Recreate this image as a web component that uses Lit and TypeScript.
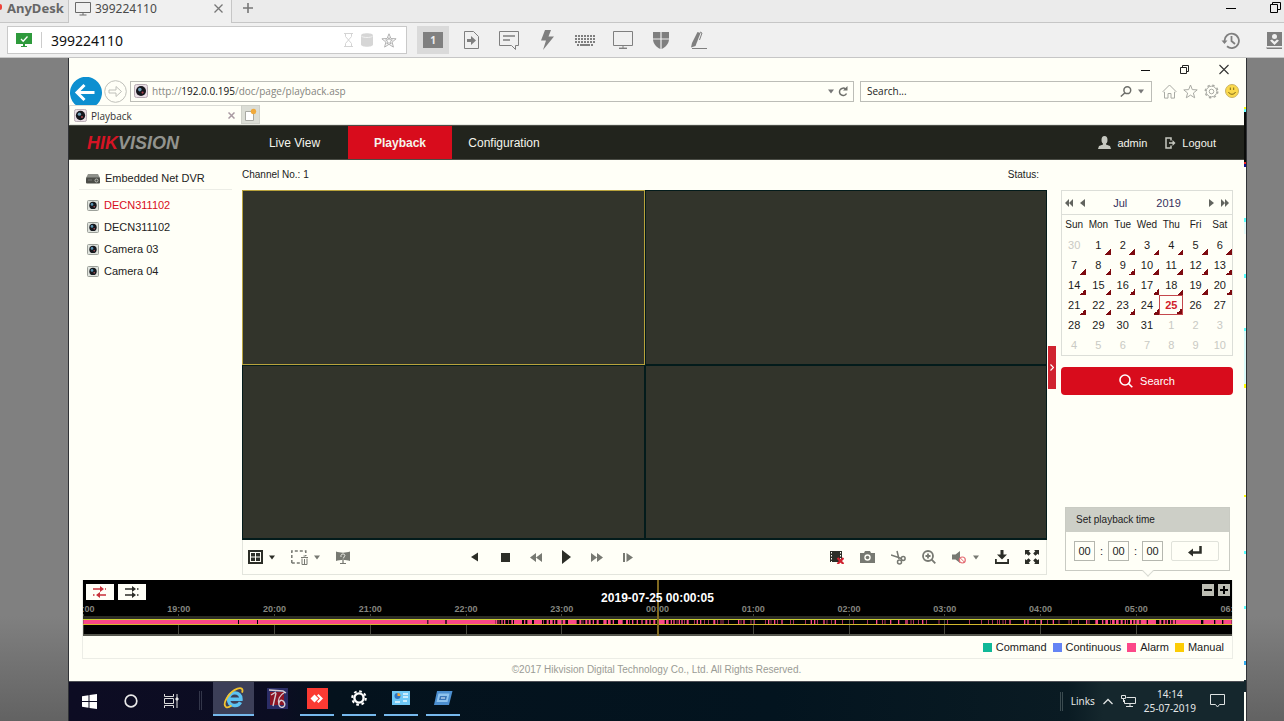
import { LitElement, html, css, svg } from "lit";
import { customElement, state } from "lit/decorators.js";
import { classMap } from "lit/directives/class-map.js";

/* ---------- shared icons ---------- */

const cameraGlyph = (size: number) => html`<svg width=${size} height=${size} viewBox="0 0 14 14" aria-hidden="true">
  <rect x="0.5" y="0.5" width="13" height="13" rx="2" fill="#eadfe6" stroke="#b7aab2" />
  <circle cx="7" cy="7" r="5" fill="#16161c" />
  <circle cx="5.8" cy="5.6" r="1.8" fill="#6f9fb8" />
  <circle cx="8.6" cy="8.6" r="1.1" fill="#a8434e" />
</svg>`;

const smallCamera = html`<svg width="12" height="11" viewBox="0 0 12 11" aria-hidden="true">
  <rect x="0.5" y="0.5" width="11" height="10" rx="1" fill="#dfe3dd" stroke="#9da19a" />
  <circle cx="6" cy="5.4" r="3.7" fill="#15181d" />
  <circle cx="5" cy="4.4" r="1.3" fill="#5b94b5" />
  <circle cx="7.2" cy="6.8" r="0.8" fill="#b0505a" />
</svg>`;

const caret = (fill: string) => html`<svg width="6" height="5" viewBox="0 0 6 5" aria-hidden="true"><path d="M0 0.5H6L3 4.5z" fill=${fill} /></svg>`;

/* ---------- AnyDesk frame ---------- */

@customElement("remote-frame")
class RemoteFrame extends LitElement {
  static styles = css`
    :host { display: block; background: #f0f0f0; font-family: "Noto Sans", "Open Sans", sans-serif; color: #4a4a4a; }
    button { border: 0; padding: 0; margin: 0; background: none; font: inherit; color: inherit; display: flex; align-items: center; justify-content: center; }
    svg { display: block; flex: none; }
    .tabs { display: flex; height: 23px; background: #ebebeb; box-sizing: border-box; overflow: hidden; }
    .brand { width: 69px; box-sizing: border-box; border-right: 1px solid #c6c6c6; border-bottom: 1px solid #c6c6c6; font-size: 13px; line-height: 16px; font-weight: 700; color: #666; background: #e6e6e6; display: flex; gap: 5px; overflow: hidden; }
    .brand i { width: 2px; height: 6px; margin-top: 4px; background: #ef443b; border-radius: 0 3px 3px 0; }
    .tab { width: 162px; display: flex; align-items: center; gap: 4px; padding: 0 8px 6px 6px; box-sizing: border-box; background: #f0f0f0; font-size: 12px; }
    .tab button { margin-left: auto; }
    .rest { flex: 1; border-left: 1px solid #c6c6c6; border-bottom: 1px solid #c6c6c6; display: flex; padding: 0 3px 7px 10px; align-items: center; }
    .win { margin-left: auto; gap: 34px; display: flex; align-items: center; }
    .bar { display: flex; align-items: center; height: 35px; box-sizing: border-box; border-bottom: 1px solid #c6c6c6; padding: 1px 2px 1px 7px; }
    .address { box-sizing: border-box; width: 400px; height: 28px; border: 1px solid #c9c9c9; background: #fff; display: flex; align-items: center; padding: 0 9px 0 8px; }
    .address .sep { width: 1px; height: 16px; background: #ccc; margin: 0 9px; }
    .address input { flex: 1; min-width: 0; border: 0; padding: 0; outline: 0; font: 14px "Noto Sans", sans-serif; color: #111; background: none; height: 24px; }
    .hints { display: flex; gap: 8px; align-items: center; }
    .tools { display: flex; margin-left: 10px; align-items: center; gap: 6px; }
    .tools button { width: 32px; height: 28px; }
    .tools .on { background: #dadada; }
    .num { width: 20px; height: 16px; background: #808080; color: #eee; font-size: 10px; line-height: 16px; font-weight: 700; text-align: center; }
    .end { margin-left: auto; display: flex; gap: 26px; }
  `;
  render() {
    const g = "#7f7f7f";
    return html`
      <div class="tabs">
        <div class="brand"><i></i><span>AnyDesk</span></div>
        <div class="tab">
          <svg width="16" height="15" viewBox="0 0 16 15" fill="none" stroke="#6a6a6a"><path d="M.5 1.5h15v10H.5zM8 11.5v2.500M4.500 14h7" /></svg>
          <span>399224110</span>
          <button aria-label="Close tab"><svg width="9" height="9" viewBox="0 0 9 9"><path d="M.5.5l8 8M8.500.5l-8 8" stroke="#777" stroke-width="1.300" /></svg></button>
        </div>
        <div class="rest">
          <button aria-label="New tab"><svg width="12" height="10" viewBox="0 0 12 10"><path d="M1 5h10M6 0v10" stroke="#777" stroke-width="1.600" /></svg></button>
          <div class="win">
            <button aria-label="Minimize"><svg width="10" height="10" viewBox="0 0 10 10"><path d="M0 5.500h10" stroke="#000" /></svg></button>
            <button aria-label="Restore"><svg width="11" height="11" viewBox="0 0 11 11" fill="none" stroke="#000"><path d="M.5 2.500h7v8h-7zM2.500 2.500v-2h8v7h-3" /></svg></button>
          </div>
        </div>
      </div>
      <div class="bar">
        <div class="address">
          <svg width="16" height="14" viewBox="0 0 16 14"><path d="M0 0h16v11H9v2h2v1H5v-1h2v-2H0z" fill="#2e9a3c" /><path d="M5 6l2.200 2.200L11.500 3.500" stroke="#fff" fill="none" stroke-width="1.300" /></svg>
          <span class="sep"></span>
          <input aria-label="Remote address" .value=${"399224110"} />
          <div class="hints">
            <svg width="9" height="14" viewBox="0 0 9 14" fill="none" stroke="#d4d4d4"><path d="M0 .5h9M0 13.500h9M1.500 1v2.500L4.500 7l3-3.500V1M1.500 13v-2.500L4.500 7l3 3.500V13" /></svg>
            <svg width="12" height="14" viewBox="0 0 12 14" fill="#d6d6d6"><path d="M0 2.500C0-.4 12-.4 12 2.500v9c0 3-12 3-12 0z" /><path d="M.5 3.200c1.500 1.700 9.500 1.700 11 0" fill="none" stroke="#f2f2f2" /></svg>
            <svg width="16" height="15" viewBox="0 0 16 15" fill="none" stroke="#a9a9a9" stroke-width=".9"><path d="M8 .8l1.900 4.700 5.200.3-4 3.300 1.300 5L8 11.300l-4.400 2.800 1.300-5-4-3.300 5.200-.3z" /><path d="M8 4.500l.9 2.300 2.500.2-1.900 1.600.6 2.400L8 9.700 5.900 11l.6-2.400L4.600 7l2.500-.2z" /></svg>
          </div>
        </div>
        <div class="tools">
          <button class="on" aria-label="Display 1"><span class="num">1</span></button>
          <button aria-label="File transfer"><svg width="15" height="18" viewBox="0 0 15 18"><path d="M.5.5h9l5 5v12H.5z" fill="none" stroke=${g} /><path d="M3 8h4V5l5 4.500L7 14v-3H3z" fill=${g} /></svg></button>
          <button aria-label="Chat"><svg width="20" height="19" viewBox="0 0 20 19"><path d="M.5.5h19v14h-3v4l-4-4H.5z" fill="none" stroke=${g} /><path d="M4 5h12M4 9h7" stroke=${g} stroke-width="1.400" /></svg></button>
          <button aria-label="Actions"><svg width="13" height="20" viewBox="0 0 13 20"><path d="M4 0h6L7.500 6.500H13L2 20l3-9.500H0z" fill=${g} /></svg></button>
          <button aria-label="Keyboard"><svg width="20" height="11" viewBox="0 0 20 11" stroke=${g} stroke-width="2"><path d="M0 1h20M0 4h20M0 7h20" stroke-dasharray="2 1" /><path d="M2 10h2M5 10h10M16 10h2" /></svg></button>
          <button aria-label="Display"><svg width="20" height="18" viewBox="0 0 20 18" fill="none" stroke=${g}><path d="M.5.5h19v14H.5zM10 15v2" /><path d="M6 17.300h8" stroke-width="1.400" /></svg></button>
          <button aria-label="Permissions"><svg width="16" height="17" viewBox="0 0 16 17" fill=${g}><path d="M0 0h7.400v6.500H0zM8.600 0H16v6.500H8.600zM0 7.500h7.400V17C3 15 .3 11.500 0 7.500zM8.600 7.500H16c-.3 4-3 7.500-7.400 9.500z" /></svg></button>
          <button aria-label="Whiteboard"><svg width="16" height="18" viewBox="0 0 16 18" fill=${g}><path d="M6.500 1l3 1L4.500 15 0 16.500 1 12z" /><path d="M8.500 9l2.500-7-2-1" stroke=${g} fill="none" /><path d="M1 17h15v1H1z" /></svg></button>
        </div>
        <div class="end">
          <button aria-label="History"><svg width="19" height="17" viewBox="0 0 19 17" fill="none" stroke=${g} stroke-width="1.800"><path d="M3.500 9A7.200 7.200 0 1 1 6 14.300" /><path d="M10.500 4v5l3.500 3" /><path d="M.5 8.500h6L3.500 12z" fill=${g} stroke="none" /></svg></button>
          <button aria-label="Address book"><svg width="16" height="17" viewBox="0 0 16 17"><path d="M1 0h15v14H1zM0 15.500h16V17H1z" fill=${g} /><circle cx="8.500" cy="4.500" r="2.500" fill="#f0f0f0" /><path d="M4 8.500L8.500 13 13 8.500l-2-1-2.500 2.300L6 7.500z" fill="#f0f0f0" /></svg></button>
        </div>
      </div>`;
  }
}

/* ---------- Internet Explorer chrome ---------- */

@customElement("ie-chrome")
class IeChrome extends LitElement {
  static styles = css`
    :host { display: block; font-family: "Open Sans", "Noto Sans", sans-serif; font-size: 10px; color: #333; }
    button { border: 0; padding: 0; margin: 0; background: none; font: inherit; color: inherit; display: flex; align-items: center; justify-content: center; }
    svg { display: block; flex: none; }
    .title { height: 19px; box-sizing: border-box; display: flex; justify-content: flex-end; align-items: flex-end; gap: 30px; padding: 0 15px 3px 0; }
    .title svg { overflow: visible; }
    .nav { display: flex; align-items: center; height: 28px; padding: 0 5px 0 1px; }
    .back { width: 32px; height: 28px; }
    .forward { margin: 0 3px 0 2px; }
    .field { box-sizing: border-box; height: 21px; border: 1px solid #bcbdb7; display: flex; align-items: center; gap: 6px; padding: 0 5px 0 3px; font-size: 10px; }
    .url { flex: 1; gap: 4px; color: #85857f; min-width: 0; }
    .url a { flex: 1; color: inherit; text-decoration: none; white-space: nowrap; }
    .url b { font-weight: 400; color: #111; }
    .find { width: 292px; margin: 0 10px 0 6px; padding: 0 7px 0 6px; min-width: 0; }
    .find input { flex: 1; min-width: 0; border: 0; padding: 0; outline: 0; background: none; font: inherit; color: #222; }
    .find input::placeholder { color: #222; opacity: 1; }
    .icons { display: flex; gap: 6px; }
    .tabs { display: flex; height: 19px; border-bottom: 1px solid #e6e8e0; margin-right: 14px; }
    .tab { width: 172px; box-sizing: border-box; padding: 1px 6px 0 4px; display: flex; align-items: center; gap: 4px; border-top: 1px solid #dadbd5; border-left: 1px solid #dadbd5; }
    .tab button { margin-left: auto; }
    .new { width: 19px; background: #dcded6; box-sizing: border-box; border: 1px solid #cfd1c9; }
  `;
  render() {
    return html`
      <div class="title">
        <button aria-label="Minimize"><svg width="9" height="10" viewBox="0 0 9 10"><path d="M0 6.500h9" stroke="#111" /></svg></button>
        <button aria-label="Restore"><svg width="9" height="9" viewBox="0 0 9 9" fill="none" stroke="#222"><path d="M.5 2.500h6v6h-6zM2.500 2.500v-2h6v6h-2" /></svg></button>
        <button aria-label="Close"><svg width="10" height="9" viewBox="0 0 10 9"><path d="M.5 0l9 9M9.500 0l-9 9" stroke="#333" stroke-width="1.100" /></svg></button>
      </div>
      <div class="nav">
        <button class="back" aria-label="Back"><svg width="32" height="29" viewBox="0 0 32 29"><path d="M7 29a16 16 0 1 1 18 0z" fill="#0d8fd0" /><path d="M7.500 15.500h17M14.500 8l-7.500 7.500 7.500 7.500" stroke="#fff" stroke-width="3" fill="none" /></svg></button>
        <button class="forward" aria-label="Forward"><svg width="23" height="23" viewBox="0 0 23 23" fill="none" stroke="#bfc0ba"><circle cx="11.500" cy="11.500" r="10.800" /><path d="M5 10h7V6.500l5.500 5-5.500 5V13H5z" /></svg></button>
        <div class="field url">
          ${cameraGlyph(14)}
          <a href="#">http://<b>192.0.0.195</b>/doc/page/playback.asp</a>
          <button aria-label="Show address bar list">${caret("#777")}</button>
          <button aria-label="Refresh"><svg width="10" height="11" viewBox="0 0 10 11"><path d="M8.500 7.500A3.700 3.700 0 1 1 7.600 3" fill="none" stroke="#6d6e69" stroke-width="1.500" /><path d="M9.500 0v4.500H5z" fill="#6d6e69" /></svg></button>
        </div>
        <label class="field find">
          <input type="text" aria-label="Search the web" placeholder="Search..." />
          <svg width="12" height="11" viewBox="0 0 12 11" fill="none" stroke="#6d6e69" stroke-width="1.500"><circle cx="7.300" cy="4.200" r="3.400" /><path d="M5 6.700L.8 10.500" /></svg>
          ${caret("#777")}
        </label>
        <div class="icons">
          <button aria-label="Home"><svg width="15" height="15" viewBox="0 0 15 15" fill="none" stroke="#a9aaa4"><path d="M1 7.500L7.500 1 14 7.500l-1 1-.5-.4v6h-3.500V9.500H6v4.600H2.500v-6L2 8.500z" /></svg></button>
          <button aria-label="Favorites"><svg width="15" height="15" viewBox="0 0 15 15" fill="none" stroke="#a9aaa4"><path d="M7.500 1l1.800 4.600 4.900.3-3.800 3.100 1.300 4.800-4.200-2.700-4.200 2.700 1.300-4.800L.8 5.900l4.900-.3z" /></svg></button>
          <button aria-label="Tools"><svg width="15" height="15" viewBox="0 0 15 15" fill="none" stroke="#a9aaa4"><circle cx="7.500" cy="7.500" r="2.300" /><circle cx="7.500" cy="7.500" r="5.300" /><circle cx="7.500" cy="7.500" r="6.300" stroke-dasharray="2.400 2.550" stroke-width="1.400" /></svg></button>
          <button aria-label="Feedback"><svg width="14" height="14" viewBox="0 0 14 14"><circle cx="7" cy="7" r="6.500" fill="#fbd94b" stroke="#c9b264" /><path d="M5.300 3.500v2.500M8.700 3.500v2.500M3.500 8c1.200 3 5.800 3 7 0" stroke="#806a1c" fill="none" /></svg></button>
        </div>
      </div>
      <div class="tabs">
        <div class="tab">${cameraGlyph(13)}<span>Playback</span><button aria-label="Close tab"><svg width="7" height="7" viewBox="0 0 7 7"><path d="M.5.5l6 6M6.500.5l-6 6" stroke="#a99aa2" stroke-width="1.500" /></svg></button></div>
        <button class="new" aria-label="New tab"><svg width="13" height="14" viewBox="0 0 13 14"><path d="M1.500 3.500h8v9h-8z" fill="#fff" stroke="#a8a9a3" /><circle cx="9.500" cy="3.500" r="2.700" fill="#f0a93b" /></svg></button>
      </div>`;
  }
}

/* ---------- calendar ---------- */

@customElement("month-calendar")
class MonthCalendar extends LitElement {
  @state() private selected = 25;
  static styles = css`
    :host { display: block; border: 1px solid #dcded8; font-size: 10px; color: #1b1b1b; }
    button { border: 0; padding: 0; margin: 0; background: none; font: inherit; color: inherit; }
    .head { display: flex; align-items: center; height: 23px; border-bottom: 1px solid #dcded8; padding: 0 3px; gap: 5px; color: #35305c; font-size: 11px; }
    .head button { display: flex; align-items: center; }
    .head .label { flex: 1; display: flex; justify-content: center; gap: 29px; }
    table { width: 100%; border-collapse: collapse; table-layout: fixed; }
    th, td { padding: 0; height: 20px; font-weight: 400; text-align: center; line-height: 18px; }
    td button { display: block; width: 100%; height: 20px; box-sizing: border-box; font-size: 11px; }
    .out { color: #c9cac4; }
    .rec { background: linear-gradient(135deg, transparent 50%, #7d0a10 50%) right bottom / 6px 6px no-repeat; }
    .sel { border: 1px solid #c4474c; color: #d0202a; font-weight: 700; }
  `;
  render() {
    const days = Array.from({ length: 42 }, (_, i) => i);
    const weeks = [0, 1, 2, 3, 4, 5].map((w) => days.slice(w * 7, w * 7 + 7));
    const g = "#62645f";
    return html`
      <div class="head">
        <button aria-label="Previous year"><svg width="8" height="8" viewBox="0 0 8 8"><path d="M4 0v8L0 4zM8 0v8L4 4z" fill=${g} /></svg></button>
        <button aria-label="Previous month"><svg width="10" height="8" viewBox="0 0 10 8"><path d="M7 0v8L2 4z" fill=${g} /></svg></button>
        <div class="label"><span>Jul</span><span>2019</span></div>
        <button aria-label="Next month"><svg width="10" height="8" viewBox="0 0 10 8"><path d="M3 0v8l5-4z" fill=${g} /></svg></button>
        <button aria-label="Next year"><svg width="8" height="8" viewBox="0 0 8 8"><path d="M0 0v8l4-4zM4 0v8l4-4z" fill=${g} /></svg></button>
      </div>
      <table>
        <thead><tr>${["Sun", "Mon", "Tue", "Wed", "Thu", "Fri", "Sat"].map((d) => html`<th scope="col">${d}</th>`)}</tr></thead>
        <tbody>${weeks.map((w) => html`<tr>${w.map((n) => {
          const inMonth = n >= 1 && n <= 31;
          const label = n === 0 ? 30 : n > 31 ? n - 31 : n;
          const cls = { out: !inMonth, rec: n >= 1 && n <= 25, sel: n === this.selected };
          return html`<td><button class=${classMap(cls)} @click=${() => inMonth && (this.selected = n)}>${label}</button></td>`;
        })}</tr>`)}</tbody>
      </table>`;
  }
}

/* ---------- timeline ---------- */

/* Alarm recordings as [offset, "start-end ..."], in thirds of a pixel; a bare number is one short clip. */
const clips: [number, string][] = [
  [-45, "46-510 513-567 570-1078 1081-1132 1136-1283"],
  [1191, "48-52 56-58 64-68 72-76 84-86 94-99 102-126 132-136 142-156 162-186 190-192 200-206 210-218 222-226 232-244 248-256 264-290 298-304 308-310 316-322 326-332 338-342 350-356 370-380 384-392 398-402 414-428 438-444 448-450 456-460 470-474 484-488 496-502 508-512 520-526 532-554 558-566 572-576 580-584 590-592 596-600 604-608 612-614 620-626 642 650-654 660-664 672 684 700-706 712 722 728 744 774-778 782 790-794 812 822 856 864-868 872 882-886 892 904-908 930 940 976 992-996 1002-1006 1012 1030-1034 1040 1054 1064-1068 1086 1120 1162 1188-1192 1206 1214 1230-1234 1254-1258 1276-1280"],
  [2301, "172 182 190 204 216-220 228 266 292 358 394 414 426 442 448 458 466 478-482 522-526 532-536 556 572-576 592 608-612 626 656 664 684 708-712 716 736-744 756-760 766-774 780 786-794 798-806 812-818 824-828 832 840-846 850-856 860-868 872-890 894-918 928-934 940-946 950-954 960-964 968-976 978-1053 1060-1092 1096-1116 1120-1145"],
];
const segments = clips.flatMap(([off, list]) =>
  list.split(" ").map((s) => {
    const [a, b] = s.split("-").map(Number);
    return { x: a + off, w: (b ?? a + 2) - a };
  })
);

@customElement("time-line")
class TimeLine extends LitElement {
  static styles = css`
    :host { display: block; border: 1px solid #ecede6; border-top: 0; font-size: 11px; color: #222; }
    button { border: 0; padding: 0; margin: 0; display: flex; align-items: center; justify-content: center; }
    .scale { position: relative; background: #000; height: 56px; overflow: hidden; display: flex; flex-direction: column; }
    .top { display: flex; justify-content: space-between; padding: 4px 2px 0 3px; height: 19px; }
    .group { display: flex; gap: 4px; }
    .mode { width: 28px; height: 16px; background: #fffff7; }
    .zoom { width: 12px; height: 12px; background: #bcbdb3; }
    .ticks { display: flex; justify-content: space-between; height: 32px; margin-top: auto; }
    .tick { width: 0; display: flex; flex-direction: column; align-items: center; font: 700 9px/10px "Liberation Sans", Arial, sans-serif; color: #84857f; }
    .tick::after { content: ""; flex: 1; width: 1px; background: #46473f; }
    .now { position: absolute; inset: 0; display: flex; flex-direction: column; align-items: center; }
    .now time { position: absolute; top: 11px; font: 700 12px/15px "Liberation Sans", Arial, sans-serif; color: #fff; }
    .now::before { content: ""; width: 2px; height: 100%; background: #80691f; }
    .track { position: absolute; left: 0; right: 0; bottom: 0; height: 20px; box-sizing: border-box; border-top: 3px solid #2c2d25; border-bottom: 2px solid #55564e; }
    .band { height: 4px; border-top: 1px solid #c9cf30; border-bottom: 1px solid #d3b92c; }
    .band svg { display: block; width: 100%; height: 4px; }
    .legend { display: flex; justify-content: flex-end; gap: 6px; height: 22px; align-items: center; padding-right: 8px; }
    .legend span { display: flex; align-items: center; gap: 4px; }
    .legend i { width: 9px; height: 9px; }
    .cmd { background: #10b898; } .cont { background: #6484f4; } .alarm { background: #fc4888; } .man { background: #fccc04; }
  `;
  render() {
    const hours = Array.from({ length: 13 }, (_, i) => `${String((18 + i) % 24).padStart(2, "0")}:00`);
    return html`
      <div class="scale">
        <div class="top">
          <div class="group">
            <button class="mode" aria-label="Synchronous playback"><svg width="16" height="12" viewBox="0 0 16 12"><path d="M1 3h8M7 9h7" stroke="#c8303a" stroke-width="1.500" /><path d="M8 0l4 3-4 3zM8 6L4 9l4 3z" fill="#c8303a" /><path d="M13 3h1M1 9h1.500" stroke="#c8303a" stroke-width="1.500" /></svg></button>
            <button class="mode" aria-label="Asynchronous playback"><svg width="16" height="12" viewBox="0 0 16 12"><path d="M1 3h8M1 9h8" stroke="#2c2d28" stroke-width="1.500" /><path d="M8 0l4 3-4 3zM8 6l4 3-4 3z" fill="#2c2d28" /><path d="M13 3h1.500M13 9h1.500" stroke="#2c2d28" stroke-width="1.500" /></svg></button>
          </div>
          <div class="group">
            <button class="zoom" aria-label="Zoom out"><svg width="8" height="8" viewBox="0 0 8 8"><path d="M0 4h8" stroke="#000" stroke-width="2" /></svg></button>
            <button class="zoom" aria-label="Zoom in"><svg width="8" height="8" viewBox="0 0 8 8"><path d="M0 4h8M4 0v8" stroke="#000" stroke-width="2" /></svg></button>
          </div>
        </div>
        <div class="ticks">${hours.map((h) => html`<div class="tick"><span>${h}</span></div>`)}</div>
        <div class="track"><div class="band"><svg viewBox="0 0 3447 4" preserveAspectRatio="none" aria-hidden="true">
          ${segments.map((s) => svg`<rect x=${s.x} y="0" width=${s.w} height="4" fill="#fc4888" />`)}
        </svg></div></div>
        <div class="now"><time>2019-07-25 00:00:05</time></div>
      </div>
      <div class="legend">
        <span><i class="cmd"></i>Command</span><span><i class="cont"></i>Continuous</span><span><i class="alarm"></i>Alarm</span><span><i class="man"></i>Manual</span>
      </div>`;
  }
}

/* ---------- DVR web page ---------- */

@customElement("dvr-page")
class DvrPage extends LitElement {
  @state() private camera = 0;
  static styles = css`
    :host { display: block; font-family: "Liberation Sans", Arial, sans-serif; font-size: 11px; color: #222; }
    button { border: 0; padding: 0; margin: 0; background: none; font: inherit; color: inherit; display: flex; align-items: center; }
    svg { display: block; flex: none; }
    .nav { display: flex; height: 35px; background: #22241d; border-top: 1px solid #4b4d46; border-bottom: 1px solid #4b4d46; box-sizing: border-box; align-items: stretch; color: #f4f4ec; }
    .logo { width: 182px; box-sizing: border-box; padding-left: 18px; font-size: 18px; font-weight: 700; font-style: italic; line-height: 34px; color: #92938e; }
    .logo b { color: #d51424; }
    .nav a { color: inherit; text-decoration: none; display: flex; align-items: center; justify-content: center; font-size: 12px; box-sizing: border-box; }
    .nav .link { width: 104px; }
    .nav .first { width: 97px; padding-right: 10px; }
    .nav .on { background: #d80c1c; font-weight: 700; }
    .nav .user { margin-left: auto; }
    .nav .small { font-size: 11px; gap: 6px; }
    .nav .exit { margin: 0 28px 0 18px; }
    .body { display: flex; height: 420px; padding: 0 11px 0 10px; box-sizing: border-box; }
    aside { width: 153px; padding-top: 7px; }
    .device { height: 22px; display: flex; align-items: center; gap: 5px; padding-left: 7px; border-bottom: 1px solid #ecede6; }
    .cams { padding: 4px 0 0 8px; }
    .cams button { height: 22px; gap: 5px; }
    .cams .on { color: #d80c1c; }
    .center { flex: 1; margin-left: 10px; padding-bottom: 5px; display: flex; flex-direction: column; min-width: 0; }
    .status { display: flex; justify-content: space-between; height: 30px; line-height: 29px; padding-right: 8px; font-size: 10px; }
    .video { flex: 1; display: grid; grid-template: 1fr 1fr / 1fr 1fr; gap: 2px; background: #031b1b; border: 1px solid #031b1b; border-bottom-width: 2px; }
    .video div { background: #32342b; }
    .video .on { box-shadow: 0 0 0 1px #b8a23c; }
    .controls { box-sizing: border-box; height: 35px; border: 1px solid #e3e5dd; border-top: 0; display: flex; align-items: center; padding: 0 7px 0 5px; }
    .set { display: flex; align-items: center; gap: 16px; }
    .set .menu { gap: 6px; }
    .play { gap: 20px; margin-left: 119px; }
    .extra { margin-left: auto; }
    .handle { width: 8px; height: 43px; margin: 186px 5px 0 1px; background: #d02330; justify-content: center; }
    .right { width: 172px; padding: 30px 0 9px; display: flex; flex-direction: column; box-sizing: border-box; }
    .search { margin-top: 11px; height: 28px; background: #d80c1c; color: #fff; border-radius: 4px; justify-content: center; gap: 7px; font-size: 11px; width: 100%; }
    .time { margin: auto 3px 0 4px; border: 1px solid #c9cbc3; position: relative; }
    .time h2 { margin: 0; font-size: 10px; font-weight: 400; background: #cdcfc7; height: 24px; line-height: 23px; padding-left: 10px; }
    .fields { display: flex; align-items: center; height: 38px; padding: 0 10px 0 8px; gap: 5px; }
    .fields input { width: 21px; height: 20px; box-sizing: border-box; border: 1px solid #b5b7af; background: none; padding: 0; text-align: center; font: 11px "Liberation Sans", Arial, sans-serif; color: #222; }
    .fields button { flex: 1; margin-left: 3px; height: 20px; border: 1px solid #e0e2da; border-radius: 2px; justify-content: center; }
    .time::after { content: ""; position: absolute; left: 78px; bottom: -5px; width: 8px; height: 8px; box-sizing: border-box; background: #fffff7; border: solid #d9dbd3; border-width: 0 1px 1px 0; transform: rotate(45deg); }
    time-line { margin: 0 11px 0 13px; }
    footer { text-align: center; color: #9a9b95; font-size: 10px; height: 22px; line-height: 21px; }
  `;
  render() {
    const d = "#2c2e27", g = "#777972";
    return html`
      <nav class="nav">
        <div class="logo"><b>HIK</b>VISION</div>
        <a class="first" href="#">Live View</a>
        <a class="link on" href="#">Playback</a>
        <a class="link" href="#">Configuration</a>
        <a class="small user" href="#"><svg width="13" height="13" viewBox="0 0 13 13" fill="#c6c8c0"><ellipse cx="6.500" cy="4" rx="3" ry="4" /><path d="M5 7h3v1.500l4 1.500 1 3H0l1-3 4-1.500z" /></svg>admin</a>
        <a class="small exit" href="#"><svg width="11" height="12" viewBox="0 0 11 12" fill="none" stroke="#c6c8c0" stroke-width="1.500"><path d="M6 3.500V1H1v10h5V8.500M4 6h5" /><path d="M7.500 3l3 3-3 3z" fill="#c6c8c0" stroke="none" /></svg>Logout</a>
      </nav>
      <div class="body">
        <aside>
          <div class="device"><svg width="14" height="11" viewBox="0 0 14 11"><path d="M2 1h10l2 4H0z" fill="#8f918a" /><rect y="4.500" width="14" height="6" rx="1" fill="#4c4e48" /><circle cx="10.500" cy="7.500" r="1.500" fill="none" stroke="#d0d2ca" stroke-width=".8" /><path d="M2 7h4" stroke="#777" /></svg>Embedded Net DVR</div>
          <div class="cams">${["DECN311102", "DECN311102", "Camera 03", "Camera 04"].map((c, i) => html`<button class=${classMap({ on: i === this.camera })} @click=${() => (this.camera = i)}>${smallCamera}${c}</button>`)}</div>
        </aside>
        <main class="center">
          <div class="status"><span>Channel No.: 1</span><span>Status:</span></div>
          <div class="video"><div class="on"></div><div></div><div></div><div></div></div>
          <div class="controls">
            <div class="set">
              <button class="menu" aria-label="Window division"><svg width="15" height="14" viewBox="0 0 15 14"><path d="M0 0h15v14H0z" fill=${d} /><path d="M2 2h11v10H2z" fill="#fffff7" /><path d="M3 3h4v3.500H3zM8 3h4v3.500H8zM3 7.500h4V11H3zM8 7.500h4V11H8z" fill=${d} /></svg>${caret(d)}</button>
              <button class="menu" aria-label="Stop all"><svg width="17" height="15" viewBox="0 0 17 15" fill="none" stroke=${g}><path d="M.8 13V1h14v5M.8 13H9" stroke-width="1.500" stroke-dasharray="3 2" /><path d="M10 7.500h7M12.500 6h2M11 8.500v6h5v-6M13.500 9v5" /></svg>${caret(g)}</button>
              <button aria-label="VCA playback"><svg width="14" height="13" viewBox="0 0 14 13"><path d="M0 .5c4 1.500 10 1.500 14 0v9.500c-4-1.300-10-1.300-14 0z" fill=${g} /><path d="M5 6V4.200C5.500 2.500 8.500 2.500 9 4.200L7 8v4" stroke="#e5e6df" fill="none" /><path d="M4 12.500h6M7 7v5.500" stroke=${g} stroke-width="1.200" /></svg></button>
            </div>
            <div class="set play">
              <button aria-label="Reverse"><svg width="12" height="10" viewBox="0 0 12 10"><path d="M9 .5v9L2 5z" fill=${d} /></svg></button>
              <button aria-label="Stop"><svg width="9" height="9" viewBox="0 0 9 9"><path d="M0 0h9v9H0z" fill=${d} /></svg></button>
              <button aria-label="Slow"><svg width="12" height="9" viewBox="0 0 12 9" fill=${g}><path d="M6 0v9L0 4.500zM12 0v9L6 4.500z" /></svg></button>
              <button aria-label="Play"><svg width="9" height="14" viewBox="0 0 9 14"><path d="M0 0v14l9-7z" fill=${d} /></svg></button>
              <button aria-label="Fast"><svg width="12" height="9" viewBox="0 0 12 9" fill=${g}><path d="M0 0v9l6-4.500zM6 0v9l6-4.500z" /></svg></button>
              <button aria-label="Frame"><svg width="10" height="9" viewBox="0 0 10 9" fill=${g}><path d="M0 0h2v9H0zM3.500 0v9L10 4.500z" /></svg></button>
            </div>
            <div class="set extra">
              <button aria-label="Stop clipping"><svg width="14" height="13" viewBox="0 0 14 13"><path d="M0 0h12v11H0z" fill=${d} /><path d="M1.500 1v10M10.500 1v10" stroke="#fffff7" stroke-dasharray="1.500 1.500" /><path d="M7.500 7l6 6M13.500 7l-6 6" stroke="#d02330" stroke-width="2.200" /></svg></button>
              <button aria-label="Capture"><svg width="15" height="12" viewBox="0 0 15 12"><path d="M0 2h4l1-2h5l1 2h4v10H0z" fill=${g} /><circle cx="7.500" cy="6.500" r="3.200" fill="#fffff7" /><circle cx="7.500" cy="6.500" r="1.800" fill=${g} /></svg></button>
              <button aria-label="Clip"><svg width="15" height="15" viewBox="0 0 15 15" fill="none" stroke=${g} stroke-width="1.500"><path d="M6 1l2 8M0 5l10.500 3.500" /><circle cx="12.200" cy="8.500" r="1.900" /><circle cx="8.500" cy="12" r="2" /></svg></button>
              <button aria-label="Digital zoom"><svg width="14" height="14" viewBox="0 0 14 14" fill="none" stroke=${g} stroke-width="1.800"><circle cx="6" cy="6" r="5" /><path d="M9.700 9.700l3.600 3.600M3.500 6h5M6 3.500v5" /></svg></button>
              <button class="menu" aria-label="Audio"><svg width="15" height="13" viewBox="0 0 15 13"><path d="M0 3.500h3.500L8 0v12L3.500 8.500H0z" fill=${g} /><circle cx="10.300" cy="9" r="3" fill="#fffff7" stroke="#e46a72" stroke-width="1.200" /><path d="M8.300 7l4 4" stroke="#e46a72" /></svg>${caret(g)}</button>
              <button aria-label="Download"><svg width="14" height="14" viewBox="0 0 14 14" fill=${d}><path d="M5.500 0h3v4.500H12L7 9.500l-5-5h3.500zM0 9h1.800v3h10.400V9H14v5H0z" /></svg></button>
              <button aria-label="Full screen"><svg width="14" height="14" viewBox="0 0 14 14" fill=${d}><path d="M0 0h5L3.700 1.300 5.800 3.600 3.600 5.800 1.300 3.700 0 5zM14 0v5l-1.300-1.300-2.300 2.100-2.200-2.200 2.100-2.300L9 0zM0 14V9l1.300 1.300 2.300-2.100 2.200 2.200-2.100 2.300L5 14zM14 14H9l1.300-1.300-2.100-2.300 2.200-2.200 2.300 2.100L14 9z" /></svg></button>
            </div>
          </div>
        </main>
        <button class="handle" aria-label="Collapse panel"><svg width="4" height="7" viewBox="0 0 4 7"><path d="M.5.5l3 3-3 3" fill="none" stroke="#fff" stroke-width="1.200" /></svg></button>
        <section class="right">
          <month-calendar></month-calendar>
          <button class="search"><svg width="14" height="14" viewBox="0 0 14 14" fill="none" stroke="#fff" stroke-width="1.600"><circle cx="6" cy="6" r="5" /><path d="M9.500 9.500l3.800 3.800" /></svg>Search</button>
          <form class="time" @submit=${(e: Event) => e.preventDefault()}>
            <h2>Set playback time</h2>
            <div class="fields">
              <input aria-label="Hour" .value=${"00"} />:<input aria-label="Minute" .value=${"00"} />:<input aria-label="Second" .value=${"00"} />
              <button aria-label="Go"><svg width="14" height="11" viewBox="0 0 14 11"><path d="M12.500 0v6.500H4" fill="none" stroke=${d} stroke-width="2.500" /><path d="M5 2.500v8L0 6.500z" fill=${d} /></svg></button>
            </div>
          </form>
        </section>
      </div>
      <time-line></time-line>
      <footer>©2017 Hikvision Digital Technology Co., Ltd. All Rights Reserved.</footer>`;
  }
}

/* ---------- Windows taskbar ---------- */

@customElement("task-bar")
class TaskBar extends LitElement {
  static styles = css`
    :host { display: flex; height: 41px; box-sizing: border-box; border-top: 1px solid #4d4f55; background: linear-gradient(90deg, #0d0c23 0, #0b0d22 18%, #04121d 22%, #03141f 60%, #0a1b23 85%, #15272d 88%, #15272d 100%); font-family: "Noto Sans", "Open Sans", sans-serif; font-size: 10px; color: #e4e6e6; }
    button { border: 0; padding: 0; margin: 0; background: none; display: flex; align-items: center; justify-content: center; width: 41px; height: 34px; }
    svg { display: block; flex: none; }
    .sys { height: 38px; }
    .sep { width: 3px; height: 19px; margin: 9px 11px 0 7px; box-sizing: border-box; border: solid #33364a; border-width: 0 1px; }
    .apps { display: flex; gap: 8px; }
    .apps button { width: 34px; border-bottom: 2px solid #76b9ed; }
    .apps .plain { border-color: transparent; width: 30px; }
    .apps .on { width: 41px; background: #3c3f58; }
    .tray { margin-left: auto; display: flex; align-items: center; gap: 8px; padding: 0 19px 2px 0; }
    .tray .sep { margin: 0; border-color: #3b4b50; }
    .clock { text-align: center; line-height: 14px; }
    .tray .note { width: 15px; margin-left: 6px; }
  `;
  render() {
    return html`
      <button class="sys" aria-label="Start"><svg width="15" height="15" viewBox="0 0 15 15" fill="#fff"><path d="M0 2.200l6.500-1V7H0zM7.500 1L15 0v7H7.500zM0 8h6.500v5.800L0 12.800zM7.500 8H15v7l-7.500-1z" /></svg></button>
      <button class="sys" aria-label="Cortana"><svg width="14" height="14" viewBox="0 0 14 14"><circle cx="7" cy="7" r="5.800" fill="none" stroke="#e8e8e8" stroke-width="1.700" /></svg></button>
      <button class="sys" aria-label="Task view"><svg width="15" height="14" viewBox="0 0 15 14" fill="none" stroke="#ddd"><path d="M.5 0v2.500h9V0M.5 14v-2.500h9V14M.5 4.500h9v5h-9zM13 0v14" /><path d="M12 4h2v2h-2z" fill="#fff" /></svg></button>
      <span class="sep"></span>
      <div class="apps">
        <button class="on" aria-label="Internet Explorer"><svg width="22" height="22" viewBox="0 0 22 22" fill="none"><path d="M5.500 12.200H18c.4-8-12.500-8.800-12.500 0 0 7.500 9.500 8 12 3" stroke="#5cc3f3" stroke-width="3.400" /><path d="M3 20C-1 17 5.500 5 14.500 1.700c4-1.400 6 .3 4.500 4M3 20c1.500 1 4-.3 5.500-1.400" stroke="#f2c430" stroke-width="1.800" /></svg></button>
        <button class="plain" aria-label="Editor"><svg width="21" height="21" viewBox="0 0 21 21"><path d="M0 0h21v21H0z" fill="#2b2d66" /><path d="M3 4h14v13H3z" fill="#8d1524" /><path d="M2 2l14 1 3 2M9 5L6 18M18 4c-5 3-8 8-6 13s8 1 5-3-6 0-5 3M4 7l5-3" stroke="#d6cfd4" stroke-width="1.400" fill="none" /></svg></button>
        <button aria-label="AnyDesk"><svg width="21" height="21" viewBox="0 0 21 21"><path d="M0 0h21v21H0z" fill="#fb3a33" /><path d="M3.500 10.500L7.500 6.500l4 4-4 4zM10 7.500l1.500-1.500 4.500 4.500-4.500 4.500L10 13.500l3-3z" fill="#fff" /></svg></button>
        <button aria-label="Settings"><svg width="16" height="16" viewBox="0 0 16 16" fill="none" stroke="#fff"><circle cx="8" cy="8" r="4.600" stroke-width="2.400" /><circle cx="8" cy="8" r="6.800" stroke-width="2" stroke-dasharray="2.700 2.640" /></svg></button>
        <button aria-label="Control panel"><svg width="18" height="14" viewBox="0 0 18 14"><path d="M0 0h18v14H0z" fill="#6fc8f5" /><circle cx="5.500" cy="5" r="3" fill="#2d72bd" /><path d="M5.500 5V2a3 3 0 0 1 3 3z" fill="#f4a636" /><path d="M11 3h5M11 6h5M3 11h5M11 10h4" stroke="#e9f8ff" stroke-width="1.400" /></svg></button>
        <button aria-label="Run"><svg width="20" height="14" viewBox="0 0 20 14"><path d="M4 0h15.500L16 14H1z" fill="#4c8fd0" /><path d="M5.500 2.500h11L14.500 11H3.500z" fill="#8ec3ee" /><path d="M7 5h7l-1 4H6z" fill="#3b76b8" /><path d="M8 7h4" stroke="#e8f4ff" /></svg></button>
      </div>
      <div class="tray">
        <span class="sep"></span><span>Links</span>
        <svg width="10" height="7" viewBox="0 0 10 7"><path d="M.5 6L5 1.500 9.500 6" fill="none" stroke="#dfe2e2" stroke-width="1.300" /></svg>
        <svg width="15" height="12" viewBox="0 0 15 12" fill="none" stroke="#dfe2e2"><path d="M5.500 2.500h9v6h-11V5M9 8.500v3M5 11.500h7M.5.500h4v3h-4zM2.500 4v3" /></svg>
        <div class="clock">14:14<br />25-07-2019</div>
        <button class="note" aria-label="Notifications"><svg width="15" height="14" viewBox="0 0 15 14" fill="none" stroke="#dfe2e2"><path d="M.5.5h14v10h-5l-2 2.500-2-2.500h-5z" /></svg></button>
      </div>`;
  }
}

@customElement("app-root")
class AppRoot extends LitElement {
  static styles = css`
    :host { display: flex; flex-direction: column; min-height: 100vh; background: #808080; }
    .stage { flex: 1; display: flex; padding: 0 37px 0 68px; background: linear-gradient(#808080 84%, #626262); }
    .screen { flex: 1; display: flex; border: 1px solid #303236; border-width: 0 1px; background: #fffff7; min-width: 0; }
    .desktop { flex: 1; display: flex; flex-direction: column; min-width: 0; }
    .edge { width: 2px; background: linear-gradient(#fffff7 49px, #ff0 49px 51px, #6ff 51px 54px, #0b0c0a 54px 104px, #e22 104px 106px, #118 106px 109px, #fffff7 109px 160px, #5ff 160px 164px, #e4fbfa 164px 176px, #fffff7 176px 216px, #5ff 216px 220px, #fffff7 220px 270px, #5ff 270px 273px, #d9fbfb 273px 326px, #ff0 326px 330px, #fffff7 330px 437px, #ff0 437px 439px, #fffff7 439px 493px, #5ff 493px 496px, #fffff7 496px 548px, #5ff 548px 551px, #fffff7 551px 603px, #3ae 603px 607px, #fffff7 607px 622px, #15272d 622px 634px, #fffff7 634px); }
    task-bar { margin-top: auto; }
  `;
  render() {
    return html`
      <remote-frame></remote-frame>
      <div class="stage">
        <div class="screen">
          <div class="desktop"><ie-chrome></ie-chrome><dvr-page></dvr-page><task-bar></task-bar></div>
          <div class="edge"></div>
        </div>
      </div>`;
  }
}
